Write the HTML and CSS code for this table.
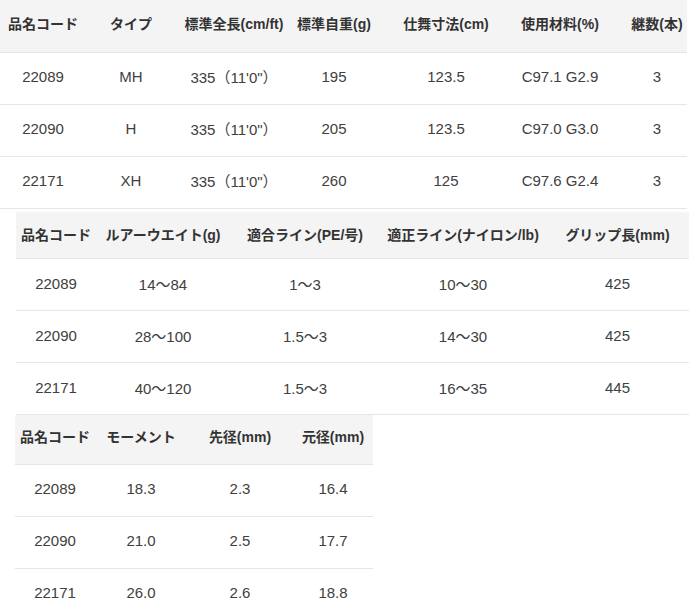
FILE: index.html
```html
<!DOCTYPE html>
<html lang="ja">
<head>
<meta charset="utf-8">
<title>スペック</title>
<link rel="stylesheet" href="styles.css">
</head>
<body>
<div class="page">
  <table class="spec spec-a">
    <colgroup><col class="a1"><col class="a2"><col class="a3"><col class="a4"><col class="a5"><col class="a6"><col class="a7"></colgroup>
    <thead>
      <tr><th>品名コード</th><th>タイプ</th><th>標準全長(cm/ft)</th><th>標準自重(g)</th><th>仕舞寸法(cm)</th><th>使用材料(%)</th><th class="last">継数(本)</th></tr>
    </thead>
    <tbody>
      <tr><td>22089</td><td>MH</td><td>335（11'0"）</td><td>195</td><td>123.5</td><td>C97.1 G2.9</td><td class="last">3</td></tr>
      <tr><td>22090</td><td>H</td><td>335（11'0"）</td><td>205</td><td>123.5</td><td>C97.0 G3.0</td><td class="last">3</td></tr>
      <tr><td>22171</td><td>XH</td><td>335（11'0"）</td><td>260</td><td>125</td><td>C97.6 G2.4</td><td class="last">3</td></tr>
    </tbody>
  </table>

  <table class="spec spec-b">
    <colgroup><col class="b1"><col class="b2"><col class="b3"><col class="b4"><col class="b5"></colgroup>
    <thead>
      <tr><th>品名コード</th><th>ルアーウエイト(g)</th><th>適合ライン(PE/号)</th><th>適正ライン(ナイロン/lb)</th><th>グリップ長(mm)</th></tr>
    </thead>
    <tbody>
      <tr><td>22089</td><td>14～84</td><td>1～3</td><td>10～30</td><td>425</td></tr>
      <tr><td>22090</td><td>28～100</td><td>1.5～3</td><td>14～30</td><td>425</td></tr>
      <tr><td>22171</td><td>40～120</td><td>1.5～3</td><td>16～35</td><td>445</td></tr>
    </tbody>
  </table>

  <table class="spec spec-c">
    <colgroup><col class="c1"><col class="c2"><col class="c3"><col class="c4"></colgroup>
    <thead>
      <tr><th>品名コード</th><th>モーメント</th><th>先径(mm)</th><th>元径(mm)</th></tr>
    </thead>
    <tbody>
      <tr><td>22089</td><td>18.3</td><td>2.3</td><td>16.4</td></tr>
      <tr><td>22090</td><td>21.0</td><td>2.5</td><td>17.7</td></tr>
      <tr><td>22171</td><td>26.0</td><td>2.6</td><td>18.8</td></tr>
    </tbody>
  </table>
</div>
</body>
</html>
```

FILE: styles.css
```css
html, body {
  margin: 0;
  padding: 0;
  background: #ffffff;
}

.page {
  font-family: "Liberation Sans", "Noto Sans CJK JP", sans-serif;
  color: #333333;
  overflow: hidden;
  width: 689px;
  height: 615px;
}

.spec {
  border-collapse: collapse;
  table-layout: fixed;
}

.spec th,
.spec td {
  padding: 0 4px;
  text-align: center;
  white-space: nowrap;
  border-bottom: 1px solid #e6e6e6;
}

.spec th {
  background: #f4f4f4;
  font-size: 14px;
  font-weight: bold;
  color: #333333;
}

.spec td {
  font-size: 15px;
  color: #404040;
  padding-bottom: 3px;
}

.spec tbody tr {
  height: 52px;
}

/* table A */
.spec-a {
  width: 687px;
  margin-left: 0;
}
.spec-a thead tr { height: 52px; }
.spec-a th { padding-bottom: 5px; }
.spec-a .a1 { width: 86px; }
.spec-a .a2 { width: 90px; }
.spec-a .a3 { width: 116px; }
.spec-a .a4 { width: 84px; }
.spec-a .a5 { width: 140px; }
.spec-a .a6 { width: 88px; }
.spec-a .a7 { width: 83px; }
.spec-a .last { padding-left: 23px; padding-right: 0; }

/* table B */
.spec-b {
  width: 673px;
  margin-left: 16px;
  margin-top: 3px;
}
.spec-b thead tr { height: 47px; }
.spec-b th { padding-bottom: 2px; }
.spec-b .b1 { width: 80px; }
.spec-b .b2 { width: 134px; }
.spec-b .b3 { width: 150px; }
.spec-b .b4 { width: 166px; }
.spec-b .b5 { width: 143px; }

/* table C */
.spec-c {
  width: 358px;
  margin-left: 15px;
  margin-top: 0;
}
.spec-c thead tr { height: 49px; }
.spec-c th { padding-bottom: 6px; }
.spec-c .c1 { width: 80px; }
.spec-c .c2 { width: 92px; }
.spec-c .c3 { width: 106px; }
.spec-c .c4 { width: 80px; }
```
